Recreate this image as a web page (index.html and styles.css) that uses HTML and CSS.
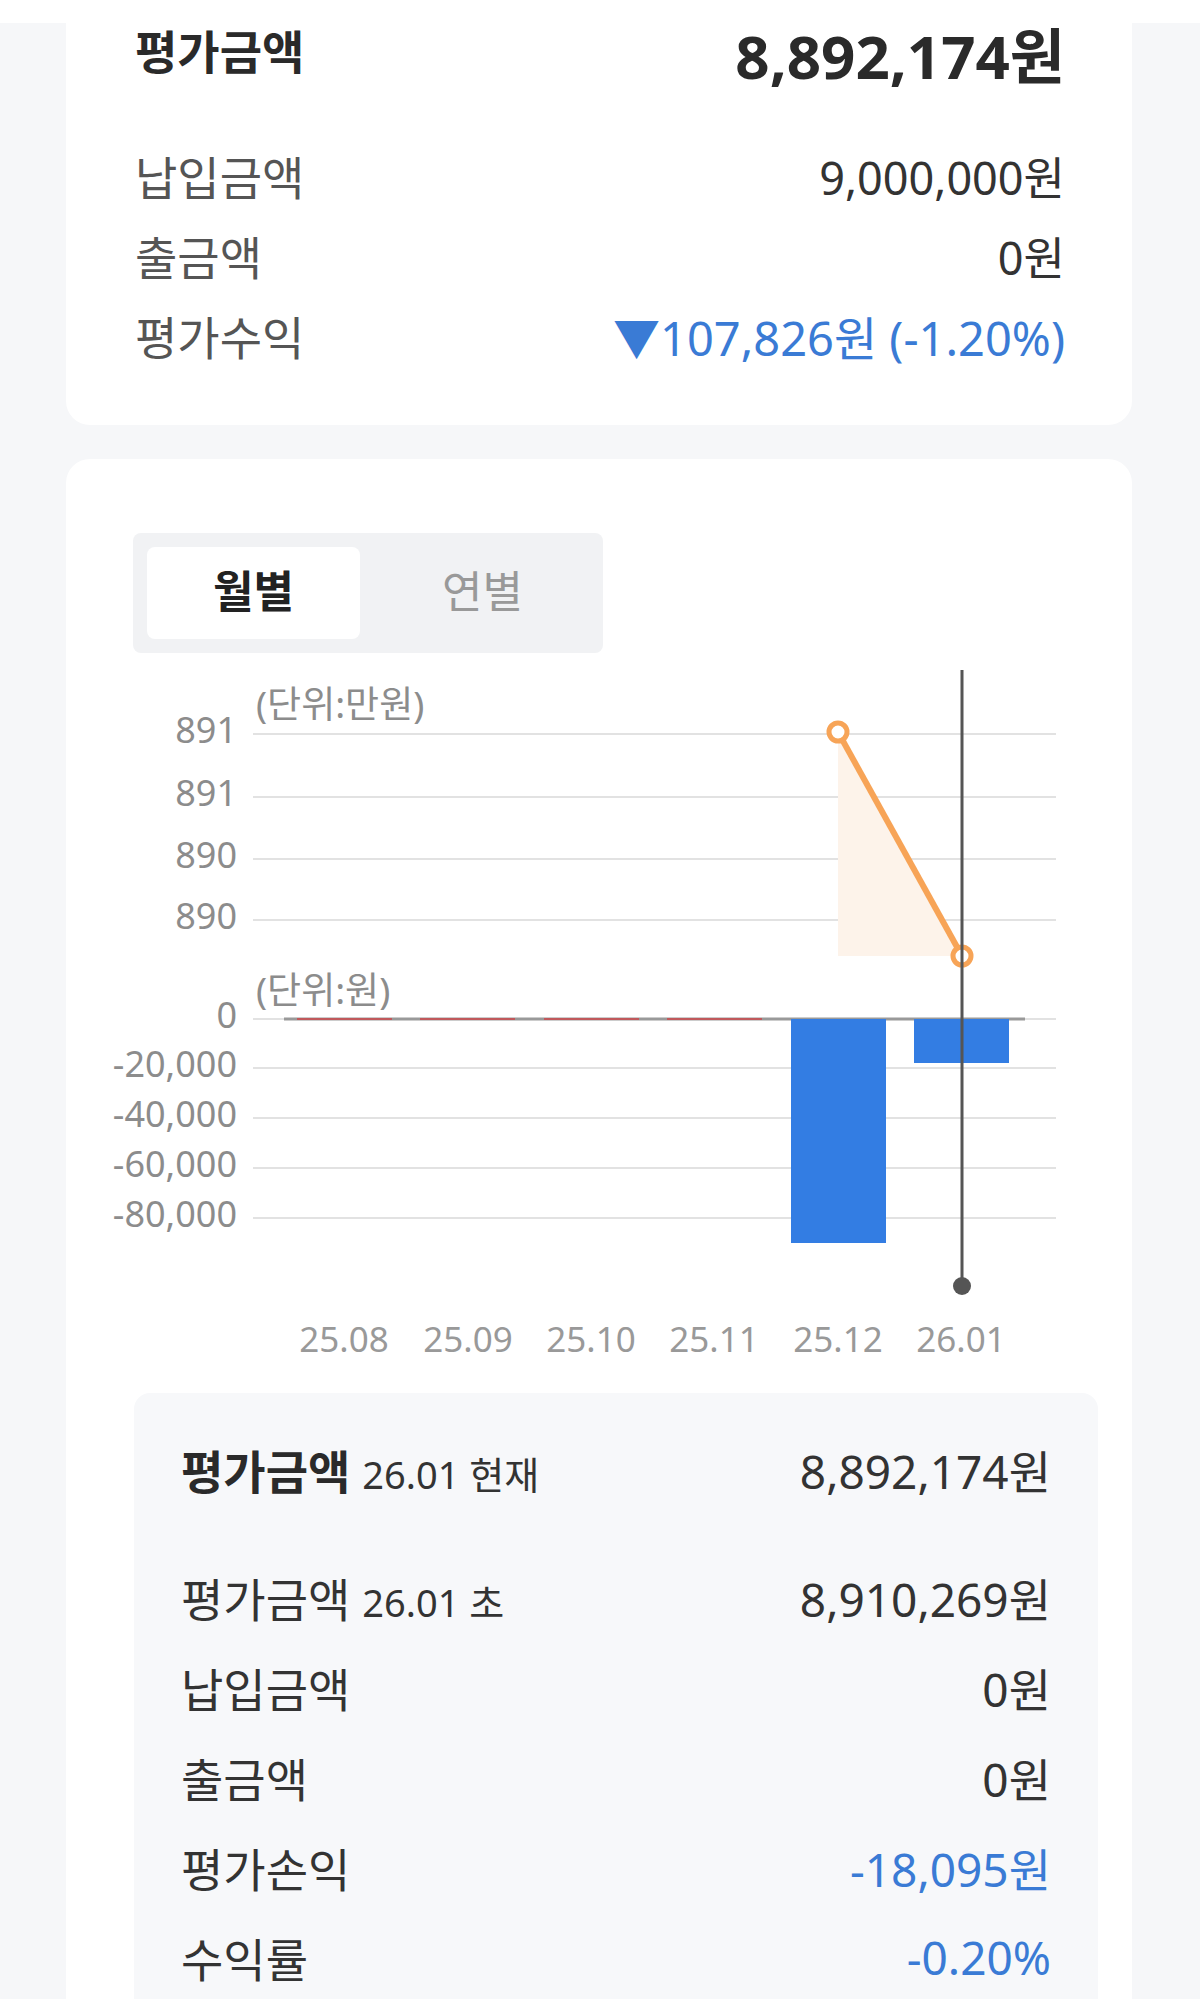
FILE: index.html
```html
<!DOCTYPE html>
<html lang="ko">
<head>
    <meta charset="UTF-8">
    <meta name="viewport" content="width=device-width, initial-scale=1.0">
    <title>평가금액</title>
    <link rel="stylesheet" href="styles.css">
</head>
<body>

<div class="topbar"></div>

<div class="card summary">
    <div class="summary-head">
        <span class="title">평가금액</span>
        <span class="total">8,892,174원</span>
    </div>
    <div class="summary-row">
        <span class="label">납입금액</span>
        <span class="value">9,000,000원</span>
    </div>
    <div class="summary-row">
        <span class="label">출금액</span>
        <span class="value">0원</span>
    </div>
    <div class="summary-row">
        <span class="label">평가수익</span>
        <span class="value down">▼107,826원 (-1.20%)</span>
    </div>
</div>

<div class="card history">
    <div class="tabs">
        <button class="tab active">월별</button>
        <button class="tab">연별</button>
    </div>

    <!-- chart drawn in page coordinates -->
    <svg class="chart" viewBox="66 653 1066 740" width="1066" height="740">
        <g class="grid">
            <line x1="253" y1="734" x2="1056" y2="734"/>
            <line x1="253" y1="797" x2="1056" y2="797"/>
            <line x1="253" y1="859" x2="1056" y2="859"/>
            <line x1="253" y1="920" x2="1056" y2="920"/>
            <line x1="253" y1="1019" x2="1056" y2="1019"/>
            <line x1="253" y1="1068" x2="1056" y2="1068"/>
            <line x1="253" y1="1118" x2="1056" y2="1118"/>
            <line x1="253" y1="1168" x2="1056" y2="1168"/>
            <line x1="253" y1="1218" x2="1056" y2="1218"/>
        </g>

        <text class="unit" x="256" y="718">(단위:만원)</text>
        <g class="axis">
            <text x="237" y="743">891</text>
            <text x="237" y="806">891</text>
            <text x="237" y="868">890</text>
            <text x="237" y="929">890</text>
        </g>

        <text class="unit" x="256" y="1004">(단위:원)</text>
        <g class="axis">
            <text x="237" y="1028">0</text>
            <text x="237" y="1077">-20,000</text>
            <text x="237" y="1127">-40,000</text>
            <text x="237" y="1177">-60,000</text>
            <text x="237" y="1227">-80,000</text>
        </g>

        <polygon class="area" points="838,732 962,956 838,956"/>
        <line class="trend" x1="838" y1="732" x2="962" y2="956"/>

        <line class="zero" x1="284" y1="1019" x2="1025" y2="1019"/>
        <g class="flat">
            <rect x="297" y="1018" width="95" height="2"/>
            <rect x="420" y="1018" width="95" height="2"/>
            <rect x="544" y="1018" width="95" height="2"/>
            <rect x="667" y="1018" width="95" height="2"/>
        </g>
        <g class="bar">
            <rect x="791" y="1019" width="95" height="224"/>
            <rect x="914" y="1019" width="95" height="44"/>
        </g>

        <circle class="point" cx="838" cy="732" r="9"/>
        <circle class="point" cx="962" cy="956" r="9"/>

        <line class="cursor" x1="962" y1="670" x2="962" y2="1286"/>
        <circle class="cursor-dot" cx="962" cy="1286" r="9"/>

        <g class="tick">
            <text x="344" y="1352">25.08</text>
            <text x="468" y="1352">25.09</text>
            <text x="591" y="1352">25.10</text>
            <text x="714" y="1352">25.11</text>
            <text x="838" y="1352">25.12</text>
            <text x="961" y="1352">26.01</text>
        </g>
    </svg>

    <div class="detail">
        <div class="detail-row detail-head">
            <span class="label"><b>평가금액</b> <small>26.01 현재</small></span>
            <span class="value">8,892,174원</span>
        </div>
        <div class="detail-row">
            <span class="label">평가금액 <small>26.01 초</small></span>
            <span class="value">8,910,269원</span>
        </div>
        <div class="detail-row">
            <span class="label">납입금액</span>
            <span class="value">0원</span>
        </div>
        <div class="detail-row">
            <span class="label">출금액</span>
            <span class="value">0원</span>
        </div>
        <div class="detail-row">
            <span class="label">평가손익</span>
            <span class="value down">-18,095원</span>
        </div>
        <div class="detail-row">
            <span class="label">수익률</span>
            <span class="value down">-0.20%</span>
        </div>
    </div>
</div>

</body>
</html>
```

FILE: styles.css
```css
body {
    margin: 0;
    background-color: #f6f7f9;
    font-family: "Noto Sans", "Noto Sans CJK KR", sans-serif;
    color: #333;
}

.topbar {
    height: 23px;
    background-color: #fff;
}

.card {
    background-color: #fff;
    margin: 0 68px 34px 66px;
    border-radius: 24px;
}

/* summary card */

.summary {
    border-radius: 0 0 24px 24px;
    padding: 0 67px 50px 69px;
}

.summary-head,
.summary-row,
.detail-row {
    display: flex;
    justify-content: space-between;
    align-items: center;
}

.summary-head {
    height: 60px;
    margin-bottom: 52px;
}

.title {
    font-size: 46px;
    font-weight: 700;
    color: #2a2a2a;
    margin-bottom: 8px;
}

.total {
    font-size: 60px;
    font-weight: 700;
    color: #2a2a2a;
}

.summary-row {
    height: 80px;
    font-size: 46px;
}

.summary-row .label {
    color: #555;
}

.summary-row .value {
    font-size: 45px;
}

.value {
    color: #333;
}

.value.down {
    color: #3a7bd5;
}

.summary-row .value.down {
    font-size: 47px;
}

/* history card */

.history {
    padding-top: 74px;
    overflow: hidden;
}

.tabs {
    display: flex;
    gap: 16px;
    width: 470px;
    box-sizing: border-box;
    margin-left: 67px;
    padding: 14px;
    background-color: #f1f2f4;
    border-radius: 8px;
}

.tab {
    flex: 1;
    height: 92px;
    padding: 0 0 8px;
    border: none;
    border-radius: 8px;
    background: transparent;
    font-family: inherit;
    font-size: 44px;
    color: #999;
}

.tab.active {
    background-color: #fff;
    color: #222;
    font-weight: 700;
}

.chart {
    display: block;
    font-family: "Noto Sans", "Noto Sans CJK KR", sans-serif;
}

.grid line {
    stroke: #e2e2e2;
    stroke-width: 2;
}

.axis text {
    fill: #8c8c8c;
    font-size: 36px;
    text-anchor: end;
}

.unit {
    fill: #8c8c8c;
    font-size: 37px;
}

.tick text {
    fill: #999;
    font-size: 35px;
    text-anchor: middle;
}

.area {
    fill: #fdf3ea;
}

.trend {
    stroke: #f7a457;
    stroke-width: 6;
}

.point {
    fill: #fff;
    stroke: #f7a457;
    stroke-width: 5;
}

.zero {
    stroke: #999;
    stroke-width: 3;
}

.flat rect {
    fill: #c0585b;
}

.bar rect {
    fill: #337de3;
}

.cursor {
    stroke: #555;
    stroke-width: 3;
}

.cursor-dot {
    fill: #555;
}

/* detail panel */

.detail {
    margin: 0 34px 0 68px;
    padding: 31px 47px 40px;
    background-color: #f7f8fa;
    border-radius: 16px;
}

.detail-row {
    height: 90px;
    font-size: 46px;
}

.detail-head {
    height: 90px;
    margin-bottom: 38px;
}

.detail-row b {
    font-weight: 700;
    color: #2a2a2a;
}

.detail-row small {
    font-size: 38px;
}
```
